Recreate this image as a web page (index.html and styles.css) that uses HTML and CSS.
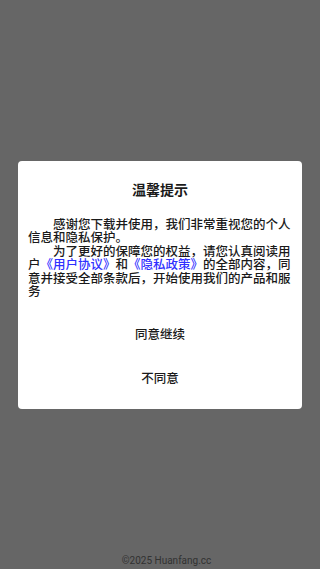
FILE: index.html
```html
<!DOCTYPE html>
<html lang="zh-CN">
  <head>
    <meta charset="utf-8">
    <title>温馨提示</title>
    <link rel="stylesheet" href="styles.css">
  </head>
  <body>

  <div class="page">
    <div class="footer">©2025 Huanfang.cc</div>
  </div>

  <div class="mask">
    <div class="dialog">
      <div class="dialog-title">温馨提示</div>
      <div class="dialog-body">
        <p>感谢您下载并使用，我们非常重视您的个人信息和隐私保护。</p>
        <p>为了更好的保障您的权益，请您认真阅读用户<a href="#">《用户协议》</a>和<a href="#">《隐私政策》</a>的全部内容，同意并接受全部条款后，开始使用我们的产品和服务</p>
      </div>
      <div class="dialog-btn">同意继续</div>
      <div class="dialog-btn">不同意</div>
    </div>
  </div>

  </body>
</html>
```

FILE: styles.css
```css
html {
  height: 100%;
}
body {
  margin: 0;
  padding: 0;
  height: 100%;
  background: #ffffff;
  color: #1a1a1a;
  font-family: "Noto Sans CJK SC", "Noto Sans", sans-serif;
}

.page {
  height: 100%;
  display: flex;
  flex-direction: column;
  justify-content: flex-end;
}

.footer {
  text-align: center;
  font-family: Roboto, "Noto Sans", sans-serif;
  font-size: 10px;
  line-height: 14px;
  color: #808080;
  padding: 0 0 1px 13px;
}

.mask {
  position: fixed;
  left: 0;
  top: 0;
  right: 0;
  bottom: 0;
  background-color: rgba(0,0,0,0.6);
  display: flex;
  align-items: center;
  justify-content: center;
}

.dialog {
  width: 284px;
  background: #ffffff;
  border-radius: 4px;
  padding: 18px 0 9px;
}

.dialog-title {
  text-align: center;
  font-size: 14px;
  font-weight: bold;
  line-height: 20px;
  margin-bottom: 18px;
}

.dialog-body {
  padding: 0 10px;
  font-size: 12.5px;
  font-weight: 500;
  line-height: 13.5px;
  margin-bottom: 14px;
}
.dialog-body p {
  margin: 0;
  text-indent: 2em;
}
.dialog-body a {
  color: #3030ff;
  text-decoration: none;
}

.dialog-btn {
  text-align: center;
  font-size: 12.5px;
  font-weight: 500;
  line-height: 44px;
  height: 44px;
  cursor: pointer;
}
```
